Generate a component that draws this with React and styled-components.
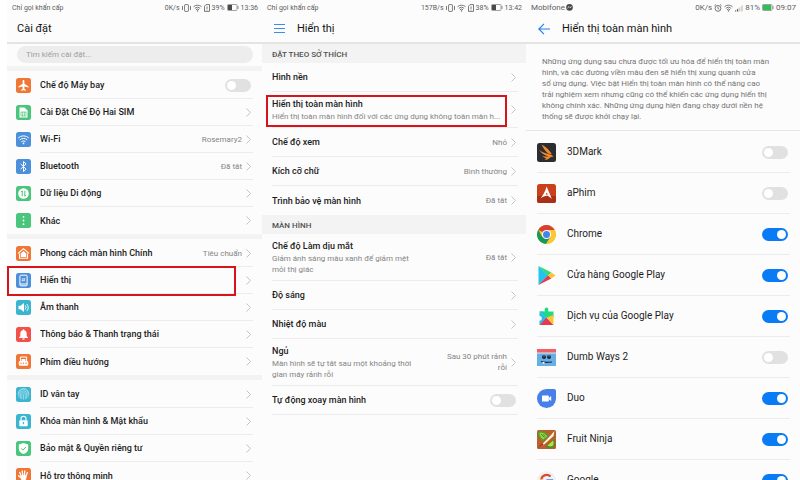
import React, { useId } from 'react';
import styled, { createGlobalStyle, css } from 'styled-components';

const Global = createGlobalStyle`
  *, *::before, *::after { box-sizing: border-box; }
  body { margin: 0; background: #fff; color: #1c1c1c; font-family: Roboto, "Noto Sans", sans-serif; overflow: hidden; }
  h1, h2, p, ul { margin: 0; padding: 0; font-weight: 400; }
  ul { list-style: none; }
  button { border: 0; background: none; padding: 0; font: inherit; color: inherit; text-align: left; cursor: pointer; }
  svg { display: block; flex: none; }
`;

const Board = styled.main`
  display: grid;
  grid-template-columns: 255fr 264fr 274fr;
  height: 100vh;
  padding-left: 7px;
  overflow: hidden;
`;

const Phone = styled.section`
  min-width: 0;
  background: #fcfcfc;
`;

const StatusBar = styled.div`
  display: flex;
  align-items: center;
  gap: 2px;
  height: 15px;
  padding: 0 4px 0 5px;
  font-size: ${p => (p.$large ? 8 : 7)}px;
  line-height: 10px;
  color: #5c5c5c;
  white-space: nowrap;
`;

const Carrier = styled.span`
  display: flex;
  align-items: center;
  gap: 1px;
  margin-right: auto;
`;

const TitleBar = styled.header`
  display: flex;
  align-items: center;
  gap: 12px;
  height: 29px;
  padding: 0 ${p => (p.$withIcon ? 12 : 10)}px;
  border-bottom: 2px solid #e4e4e4;
`;

const Title = styled.h1`
  font-size: 11px;
  line-height: 16px;
  color: #151515;
  white-space: nowrap;
`;

const SearchWrap = styled.div`
  padding: 2px 9px 3px 10px;
`;

const SearchInput = styled.input`
  display: block;
  width: 100%;
  height: 17px;
  border: 0;
  border-radius: 9px;
  padding: 0 9px;
  background: #ededed;
  font: 8px/12px Roboto, "Noto Sans", sans-serif;
  &::placeholder { color: #a0a0a0; opacity: 1; }
`;

const Group = styled.ul`
  border-top: 5px solid #f3f3f3;
  padding-top: 1px;
`;

const Divider = css`
  border-bottom: 1px solid #ececec;
`;

const SettingItem = styled.li`
  position: relative;
  display: flex;
  align-items: center;
  gap: 9px;
  height: 27px;
  padding: 0 9px;
`;

const SettingBody = styled.div`
  flex: 1;
  display: flex;
  align-items: center;
  justify-content: space-between;
  align-self: stretch;
  padding-right: 2px;
  ${SettingItem}:not(:last-child) > & { ${Divider} }
`;

const RowButton = styled.button`
  flex: 1;
  align-self: stretch;
  display: flex;
  align-items: center;
  gap: 4px;
  min-width: 0;
`;

const RowText = styled.span`
  flex: 1;
  min-width: 0;
`;

const labelText = css`
  display: block;
  font-size: 9px;
  line-height: 14px;
  font-weight: 500;
  color: #1c1c1c;
  white-space: nowrap;
`;
const Label = styled.span`${labelText}`;
const ToggleLabel = styled.label`${labelText}`;

const Note = styled.span`
  display: block;
  font-size: 8px;
  line-height: 11px;
  color: #858585;
  ${p => (p.$oneLine ? 'white-space: nowrap;' : 'max-width: 148px;')}
`;

const Value = styled.span`
  max-width: 66px;
  font-size: 8px;
  line-height: 11px;
  text-align: right;
  color: #858585;
`;

const Marker = styled.span`
  position: absolute;
  inset: ${p => p.$inset};
  border: 2px solid #d7141a;
  pointer-events: none;
`;

const Switch = styled.input.attrs({ type: 'checkbox', role: 'switch' })`
  appearance: none;
  flex: none;
  display: flex;
  align-items: center;
  width: 26px;
  height: 13px;
  margin: 0;
  padding: 0 2px;
  border-radius: 7px;
  background: #e1e1e1;
  cursor: pointer;
  &::before { content: ''; width: 9px; height: 9px; border-radius: 50%; background: #fff; }
  &:checked { background: #087bf5; justify-content: flex-end; }
`;

const SectionTitle = styled.h2`
  height: 19px;
  padding: 4px 10px 0;
  background: #f3f3f3;
  font-size: 8px;
  line-height: 14px;
  font-weight: 500;
  color: #505050;
`;

const DisplayList = styled.ul`
  padding: 0 8px 0 10px;
`;

const DisplayItem = styled.li`
  position: relative;
  display: flex;
  align-items: center;
  justify-content: space-between;
  min-height: 29px;
  padding: ${p => (p.$tall ? '5px' : '0')} 2px ${p => (p.$tall ? '5px' : '0')} 0;
  ${p => !p.$last && Divider}
`;

const Intro = styled.p`
  padding: 12px 16px 8px;
  border-bottom: 1px solid #e6e6e6;
  font-size: 8px;
  line-height: 11px;
  color: #757575;
`;

const IntroLine = styled.span`
  display: block;
  white-space: nowrap;
`;

const AppList = styled.ul`
  padding: 1px 10px 0 11px;
`;

const AppItem = styled.li`
  display: flex;
  align-items: center;
  gap: 11px;
  height: 41px;
  padding-right: 2px;
  border-bottom: 1px solid #ececec;
  ${ToggleLabel} { flex: 1; font-size: 10px; font-weight: 400; }
`;

const Chevron = () => (
  <svg width="5" height="9" viewBox="0 0 5 9" fill="none" stroke="#c4c4c4" strokeWidth="1"><path d="M.5.5l4 4-4 4" /></svg>
);

/* ---- status bar drawings ---- */
const Vibrate = () => (
  <svg width="9" height="8" viewBox="0 0 9 8" fill="none" stroke="#6a6a6a" strokeWidth=".9"><rect x="2.6" y=".6" width="3.8" height="6.8" rx=".6" /><path d="M.5 2v4M8.500 2v4" /></svg>
);
const Wifi = () => (
  <svg width="9" height="8" viewBox="0 0 9 8" fill="none" stroke="#6a6a6a" strokeWidth=".9"><path d="M.5 2.700a6 6 0 0 1 8 0M1.800 4.300a4 4 0 0 1 5.400 0M3 5.800a2 2 0 0 1 3 0" /><circle cx="4.500" cy="6.900" r=".4" /></svg>
);
const Sim = () => (
  <svg width="6" height="8" viewBox="0 0 6 8" fill="none" stroke="#6a6a6a" strokeWidth=".9"><path d="M2 .6h3.500v6.800H.5V2.200zM3 2.500v2.400M3 5.600v.8" /></svg>
);
const Battery = ({ color = '#4a4a4a', level = 4 }) => (
  <svg width="12" height="7" viewBox="0 0 12 7"><rect x=".5" y=".5" width="9.500" height="6" rx=".8" fill="none" stroke="#8a8a8a" strokeWidth=".8" /><rect x="1" y="1" width={level} height="5" fill={color} /><path d="M11 2v3" stroke="#8a8a8a" /></svg>
);
const Alarm = () => (
  <svg width="8" height="8" viewBox="0 0 8 8" fill="none" stroke="#6a6a6a" strokeWidth=".9"><circle cx="4" cy="4.400" r="2.900" /><path d="M4 2.600v2l1.300.6M.4 1.800L1.900.5M7.600 1.800L6.100.5" /></svg>
);
const Signal = () => (
  <svg width="8" height="8" viewBox="0 0 8 8"><path d="M0 7.500h1.200V6L0 6.800zM2 7.500h1.200V4.500L2 5.500z" fill="#555" /><path d="M4 7.500h1.400V2.800L4 4zM6.200 7.500h1.600V.8L6.200 2.200z" fill="#ccc" /></svg>
);
const Messenger = () => (
  <svg width="7" height="7" viewBox="0 0 7 7"><circle cx="3.500" cy="3.400" r="3.300" fill="#4a4a4a" /><path d="M1.400 4.200L3 2.600l1 1 1.600-1" fill="none" stroke="#fff" strokeWidth=".8" /></svg>
);

/* ---- title bar drawings ---- */
const MenuIcon = () => (
  <svg width="11" height="10" viewBox="0 0 11 10" stroke="#3b8ee6"><path d="M0 .5h11M0 4.500h11M0 8.500h11" /></svg>
);
const BackIcon = () => (
  <svg width="12" height="12" viewBox="0 0 12 12" fill="none" stroke="#1d7fe8" strokeWidth="1.100"><path d="M12 6H.8M6 .8L.8 6 6 11.200" /></svg>
);

/* ---- setting tiles ---- */
const tiles = {
  plane: ['#ef7634', <path key="a" d="M7.500 2c.7 0 .9.700.9 1.500v2.300l4.200 2.600v1.200L8.400 8.400v2.300l1.500 1.200v.9l-2.400-.6-2.400.6v-.9l1.500-1.200V8.400L2.400 9.600V8.400l4.200-2.600V3.500C6.600 2.700 6.800 2 7.500 2z" fill="#fff" />],
  sim: ['#4bc57c', <g key="a"><path d="M3.500 2.500h5l3 3v7h-8z" fill="#fff" /><path d="M5 7h5v4H5zM6.600 7v4M8.400 7v4" fill="none" stroke="#4bc57c" strokeWidth=".7" /></g>],
  wifi: ['#4c8fda', <g key="a" fill="none" stroke="#fff" strokeWidth="1"><path d="M2.200 6a7.600 7.600 0 0 1 10.600 0M3.800 7.900a5.300 5.300 0 0 1 7.400 0M5.500 9.700a3 3 0 0 1 4 0" /><circle cx="7.500" cy="11.300" r=".5" fill="#fff" /></g>],
  bluetooth: ['#4c8fda', <path key="a" d="M4.600 4.800l5.500 5.300-2.600 2.400v-10l2.600 2.400-5.500 5.300" fill="none" stroke="#fff" />],
  data: ['#4bc57c', <g key="a"><circle cx="7.500" cy="7.500" r="5.300" fill="#fff" /><path d="M6.200 10.200V4.800L4.900 6.100M8.800 4.800v5.400l1.300-1.300" fill="none" stroke="#4bc57c" /></g>],
  more: ['#4bc57c', <g key="a" fill="#fff"><circle cx="7.500" cy="3.800" r=".9" /><circle cx="7.500" cy="7.500" r=".9" /><circle cx="7.500" cy="11.200" r=".9" /></g>],
  home: ['#ef7634', <g key="a"><path d="M2 7.400l5.500-4.700L13 7.400M3.500 7.500v4.700h8V7.500" fill="none" stroke="#fff" strokeWidth="1.100" /><path d="M4.700 7.500l2.800-2.400 2.800 2.400v3.600H4.700z" fill="#fff" /></g>],
  display: ['#4c8fda', <g key="a"><rect x="3.900" y="2.200" width="7.200" height="10.600" rx="1" fill="none" stroke="#fff" /><path d="M4 11h7" stroke="#fff" /><path d="M6.300 8.500L7 5M8 8.500L8.700 5M5.800 6h3.500M5.600 7.500h3.500" stroke="#fff" strokeWidth=".5" /></g>],
  sound: ['#3bb4d0', <g key="a"><path d="M2.500 5.800h2L8 3v9L4.500 9.200h-2z" fill="#fff" /><path d="M9.200 5.500a3 3 0 0 1 0 4M10.800 4a5 5 0 0 1 0 7" fill="none" stroke="#fff" strokeWidth=".9" /></g>],
  bell: ['#f25048', <path key="a" d="M7.500 2.300c.6 0 .9.400.9.900 1.600.4 2.300 1.700 2.300 3.300v2.600l1.300 1.500v.5H3v-.5l1.300-1.500V6.500c0-1.600.7-2.900 2.300-3.300 0-.5.300-.9.900-.9zM6.200 11.600h2.600a1.300 1.200 0 0 1-2.600 0z" fill="#fff" />],
  nav: ['#ef7634', <g key="a"><path d="M4.400 7V3h6.200v4" fill="none" stroke="#fff" /><path d="M5.500 5h4v2h-4z" fill="#fff" /><rect x="2.800" y="7" width="9.400" height="4.800" rx="1.200" fill="#fff" /><g fill="#ef7634"><circle cx="5" cy="9.200" r=".7" /><circle cx="7.500" cy="9.200" r=".7" /><circle cx="10" cy="9.200" r=".7" /></g></g>],
  finger: ['#3bb4d0', <g key="a" fill="none" stroke="#c8edf5" strokeWidth=".6"><path d="M3 10.500V6.800a4.500 4.500 0 0 1 9 0v3.700M4.400 11.700V7a3.100 3.100 0 0 1 6.200 0v4.700M5.800 12.300V7a1.700 1.700 0 0 1 3.400 0v5.300M7.500 6.800v5.800M2.200 8V6.500A5.300 5.300 0 0 1 7.500 1.600 5.300 5.300 0 0 1 12.800 6.500V8" /></g>],
  lock: ['#3bb4d0', <g key="a"><path d="M5 6.500V4.800a2.500 2.500 0 0 1 5 0v1.700" fill="none" stroke="#fff" strokeWidth="1.100" /><rect x="3.300" y="6.200" width="8.400" height="6" rx=".7" fill="#fff" /><path d="M7.500 8v2.200" stroke="#3bb4d0" strokeWidth="1.200" /></g>],
  shield: ['#4bc57c', <g key="a"><path d="M7.500 2l4.700 1.500v4.200c0 2.500-2 4.300-4.700 5.400-2.700-1.100-4.700-2.900-4.700-5.400V3.500z" fill="#fff" /><path d="M5.200 7.400l1.700 1.700 3-3.100" fill="none" stroke="#4bc57c" /></g>],
  hand: ['#ef7634', <path key="a" d="M5.100 8.200L3.700 4.300M6.700 7.500L6.200 2.800M8.300 7.500l.5-4.700M10 8l1.400-3.500M4.800 9.800L2.500 7.800" fill="none" stroke="#fff" strokeWidth="1.300" strokeLinecap="round" />],
};

const Tile = ({ name }) => (
  <svg width="15" height="15" viewBox="0 0 15 15" aria-hidden="true">
    <rect width="15" height="15" rx="2.500" fill={tiles[name][0]} />
    {tiles[name][1]}
    {name === 'hand' && <path d="M4.300 7.300h6.500l-.7 4.200-2.500 1.700-2.300-1z" fill="#fff" />}
  </svg>
);

/* ---- app logos ---- */
const logos = {
  mark: <g><rect width="19" height="19" rx="2.500" fill="#2b2d30" /><path d="M4.500 1.500c4 2 8 5.500 10.300 9.600l-3.300-.3C8.200 8.500 6.200 5 4.500 1.500zM2 7c3.500 2.800 8 3.800 12.500 4.800l2 2-4.700-.2C8 12.500 4.500 10.500 2 7zM5 12.900c3 .8 6 .2 9.500.8L10 16.700l-2.500-.3 2-1.300C8 14.900 6.300 14.200 5 12.900z" fill="#f08a2c" /></g>,
  aphim: <g><rect width="19" height="19" rx="2.500" fill="#c9401c" /><path d="M0 12h19v4.500a2.500 2.500 0 0 1-2.500 2.500h-14A2.500 2.500 0 0 1 0 16.500z" fill="#a92f16" /><path d="M9.600 2.500l5.200 12.200-4-2.900c-2.500-.3-4.500.7-7.300 2.600C6.300 11 8.500 7 9.600 2.500z" fill="#fff" /><path d="M9.700 8.500l-1 2 2.200.3z" fill="#c9401c" /></g>,
  chrome: <g><circle cx="9.500" cy="9.500" r="9.500" fill="#fbc832" /><path d="M9.500 9.500L1.300 4.700A9.500 9.500 0 0 1 17.700 4.900H9.500z" fill="#d93f32" /><path d="M1.300 4.700A9.500 9.500 0 0 0 9.100 19l4.400-7.100L9.500 9.500 5.300 12z" fill="#159b57" /><path d="M17.700 4.900H9.500l4.100 7L9.100 19a9.500 9.500 0 0 0 8.600-14.100z" fill="#fbc832" /><circle cx="9.500" cy="9.500" r="4.500" fill="#fff" /><circle cx="9.500" cy="9.500" r="3.500" fill="#4683f1" /></g>,
  play: <g><path d="M1.500 0v19l9.500-9.500z" fill="#23c3ec" /><path d="M1.500 0l12.800 6.600L11 9.800z" fill="#27dd7c" /><path d="M1.500 19L11 9.300l3.300 3.200z" fill="#e33a50" /><path d="M14.300 6.500l4.200 3-4.200 3L11 9.500z" fill="#fcc52e" /></g>,
  services: <g><path d="M2.500 4.500h5.200V2.200a1.800 1.800 0 1 1 3.600 0v2.300h5.200v6l-6.800.5z" fill="#1fdc83" /><path d="M2.500 4.500l7.200 6.500-7.200 7v-4.200a2.400 2.400 0 0 0 0-4.800z" fill="#28b9ec" /><path d="M2.500 4.500h4l3.300 6z" fill="#17cfb0" /><path d="M2.500 18l7-7.500 7 7.500z" fill="#e13b53" /><path d="M16.500 8v10l-6.800-7.500z" fill="#fbc72c" /></g>,
  dumb: <g><path d="M0 5h19v13H0z" fill="#65aee6" /><path d="M0 1h19v4H0z" fill="#f05e69" /><path d="M0 4.500h19v1H0z" fill="#d9ebf5" /><circle cx="7" cy="9" r="2" fill="#1d2733" /><circle cx="12" cy="9" r="2" fill="#1d2733" /><path d="M6.500 8h1M11.500 8h1" stroke="#fff" strokeWidth=".7" /><path d="M4 13.500c3 1.300 7 1 11 .5" fill="none" stroke="#1d2733" strokeWidth="1.200" /><path d="M5.500 14h2v1.500h-2z" fill="#fff" /></g>,
  duo: <g><path d="M9.500 0H17a2 2 0 0 1 2 2v7.500A9.500 9.500 0 1 1 9.500 0z" fill="#4680e8" /><rect x="5" y="6.500" width="6.800" height="6" rx=".6" fill="#fff" /><path d="M11.800 8.900L14.200 7v5l-2.400-1.700z" fill="#fff" /></g>,
  fruit: <g><rect width="19" height="19" rx="1.500" fill="#b5622d" /><path d="M1 2c4-2 9 1 10.500 4.500L6 11C2.500 8.500.8 5 1 2z" fill="#49a534" /><path d="M2.500 3c3-.8 6.300 1 7.500 3.500L6.200 9.500C4 8 2.500 5.500 2.500 3z" fill="#9fd13f" /><path d="M4 4l3.500 3.500M6.500 4.200L8 6.500" stroke="#2c7c24" strokeWidth=".8" /><path d="M9 16.500l7.500-7.500c2 3 1.500 6.500 0 8-2 1.500-5 1.200-7.500-.5z" fill="#379528" /><path d="M10.500 15.500l5.500-5c1 2 .8 4.300-.3 5.300-1.300 1-3.500.7-5.200-.3z" fill="#c5d848" /><path d="M3 16.500L14 5l3.500-4-1 5L5.500 16z" fill="#fff3df" /><path d="M1 18l4-5 2 2z" fill="#c62d1d" /></g>,
  google: <g><circle cx="9.500" cy="9.500" r="9.500" fill="#f1f1f1" /><path d="M13.500 5.500A5.500 5.500 0 0 0 4.300 8" fill="none" stroke="#e24436" strokeWidth="2.300" /><path d="M4.300 8a5.500 5.500 0 0 0 .6 4.500" fill="none" stroke="#fabc13" strokeWidth="2.300" /><path d="M4.900 12.500a5.500 5.500 0 0 0 8.600 1" fill="none" stroke="#33a753" strokeWidth="2.300" /><path d="M9.500 9.500H15c0 2-.5 3-1.500 4" fill="none" stroke="#4285f4" strokeWidth="2.300" /></g>,
};

const Logo = ({ name }) => <svg width="19" height="19" viewBox="0 0 19 19" aria-hidden="true">{logos[name]}</svg>;

const groups = [
  [
    { icon: 'plane', label: 'Chế độ Máy bay', toggle: true },
    { icon: 'sim', label: 'Cài Đặt Chế Độ Hai SIM' },
    { icon: 'wifi', label: 'Wi-Fi', value: 'Rosemary2' },
    { icon: 'bluetooth', label: 'Bluetooth', value: 'Đã tắt' },
    { icon: 'data', label: 'Dữ liệu Di động' },
    { icon: 'more', label: 'Khác' },
  ],
  [
    { icon: 'home', label: 'Phong cách màn hình Chính', value: 'Tiêu chuẩn' },
    { icon: 'display', label: 'Hiển thị', marked: true },
    { icon: 'sound', label: 'Âm thanh' },
    { icon: 'bell', label: 'Thông báo & Thanh trạng thái' },
    { icon: 'nav', label: 'Phím điều hướng' },
  ],
  [
    { icon: 'finger', label: 'ID vân tay' },
    { icon: 'lock', label: 'Khóa màn hình & Mật khẩu' },
    { icon: 'shield', label: 'Bảo mật & Quyền riêng tư' },
    { icon: 'hand', label: 'Hỗ trợ thông minh' },
  ],
];

const preferences = [
  { label: 'Hình nền' },
  { label: 'Hiển thị toàn màn hình', note: 'Hiển thị toàn màn hình đối với các ứng dụng không toàn màn h...', oneLine: true, marked: true },
  { label: 'Chế độ xem', value: 'Nhỏ' },
  { label: 'Kích cỡ chữ', value: 'Bình thường' },
  { label: 'Trình bảo vệ màn hình', value: 'Đã tắt', last: true },
];

const screen = [
  { label: 'Chế độ Làm dịu mắt', note: 'Giảm ánh sáng màu xanh để giảm mệt mỏi thị giác', value: 'Đã tắt' },
  { label: 'Độ sáng' },
  { label: 'Nhiệt độ màu' },
  { label: 'Ngủ', note: 'Màn hình sẽ tự tắt sau một khoảng thời gian máy rảnh rỗi', value: 'Sau 30 phút rảnh rỗi' },
  { label: 'Tự động xoay màn hình', toggle: true },
];

const intro = [
  'Những ứng dụng sau chưa được tối ưu hóa để hiển thị toàn màn',
  'hình, và các đường viền màu đen sẽ hiển thị xung quanh cửa',
  'sổ ứng dụng. Việc bật Hiển thị toàn màn hình có thể nâng cao',
  'trải nghiệm xem nhưng cũng có thể khiến các ứng dụng hiển thị',
  'không chính xác. Những ứng dụng hiện đang chạy dưới nền hệ',
  'thống sẽ được khởi chạy lại.',
];

const apps = [
  ['mark', '3DMark', false],
  ['aphim', 'aPhim', false],
  ['chrome', 'Chrome', true],
  ['play', 'Cửa hàng Google Play', true],
  ['services', 'Dịch vụ của Google Play', true],
  ['dumb', 'Dumb Ways 2', false],
  ['duo', 'Duo', true],
  ['fruit', 'Fruit Ninja', true],
  ['google', 'Google', true],
];

function ToggleRow({ label }) {
  const id = useId();
  return (
    <>
      <ToggleLabel htmlFor={id}>{label}</ToggleLabel>
      <Switch id={id} />
    </>
  );
}

function LinkRow({ item }) {
  return (
    <RowButton type="button">
      <RowText>
        <Label>{item.label}</Label>
        {item.note && <Note $oneLine={item.oneLine}>{item.note}</Note>}
      </RowText>
      {item.value && <Value>{item.value}</Value>}
      <Chevron />
    </RowButton>
  );
}

function DisplayRows({ items }) {
  return (
    <DisplayList>
      {items.map(item => (
        <DisplayItem key={item.label} $tall={!!item.note} $last={item.last}>
          {item.toggle ? <ToggleRow label={item.label} /> : <LinkRow item={item} />}
          {item.marked && <Marker $inset="3px 11px 0 -6px" />}
        </DisplayItem>
      ))}
    </DisplayList>
  );
}

function AppRow({ icon, name, on }) {
  const id = useId();
  return (
    <AppItem>
      <Logo name={icon} />
      <ToggleLabel htmlFor={id}>{name}</ToggleLabel>
      <Switch id={id} defaultChecked={on} />
    </AppItem>
  );
}

export default function App() {
  return (
    <>
      <Global />
      <Board>
        <Phone>
          <StatusBar>
            <Carrier>Chỉ gọi khẩn cấp</Carrier>
            <span>0K/s</span><Vibrate /><Wifi /><Sim /><span>39%</span><Battery /><span>13:36</span>
          </StatusBar>
          <TitleBar><Title>Cài đặt</Title></TitleBar>
          <SearchWrap><SearchInput type="search" aria-label="Tìm kiếm cài đặt" placeholder="Tìm kiếm cài đặt..." /></SearchWrap>
          {groups.map(group => (
            <Group key={group[0].label}>
              {group.map(item => (
                <SettingItem key={item.label}>
                  <Tile name={item.icon} />
                  <SettingBody>{item.toggle ? <ToggleRow label={item.label} /> : <LinkRow item={item} />}</SettingBody>
                  {item.marked && <Marker $inset="-1px 26px -2px 0" />}
                </SettingItem>
              ))}
            </Group>
          ))}
        </Phone>
        <Phone>
          <StatusBar>
            <Carrier>Chỉ gọi khẩn cấp</Carrier>
            <span>157B/s</span><Vibrate /><Wifi /><Sim /><span>38%</span><Battery /><span>13:42</span>
          </StatusBar>
          <TitleBar $withIcon>
            <button type="button" aria-label="Menu"><MenuIcon /></button>
            <Title>Hiển thị</Title>
          </TitleBar>
          <SectionTitle>ĐẶT THEO SỞ THÍCH</SectionTitle>
          <DisplayRows items={preferences} />
          <SectionTitle>MÀN HÌNH</SectionTitle>
          <DisplayRows items={screen} />
        </Phone>
        <Phone>
          <StatusBar $large>
            <Carrier>Mobifone<Messenger /></Carrier>
            <span>0K/s</span><Alarm /><Wifi /><Signal /><span>81%</span><Battery color="#2fbf53" level={8} /><span>09:07</span>
          </StatusBar>
          <TitleBar $withIcon>
            <button type="button" aria-label="Quay lại"><BackIcon /></button>
            <Title>Hiển thị toàn màn hình</Title>
          </TitleBar>
          <Intro>{intro.map(line => <IntroLine key={line}>{line} </IntroLine>)}</Intro>
          <AppList>{apps.map(([icon, name, on]) => <AppRow key={name} icon={icon} name={name} on={on} />)}</AppList>
        </Phone>
      </Board>
    </>
  );
}
